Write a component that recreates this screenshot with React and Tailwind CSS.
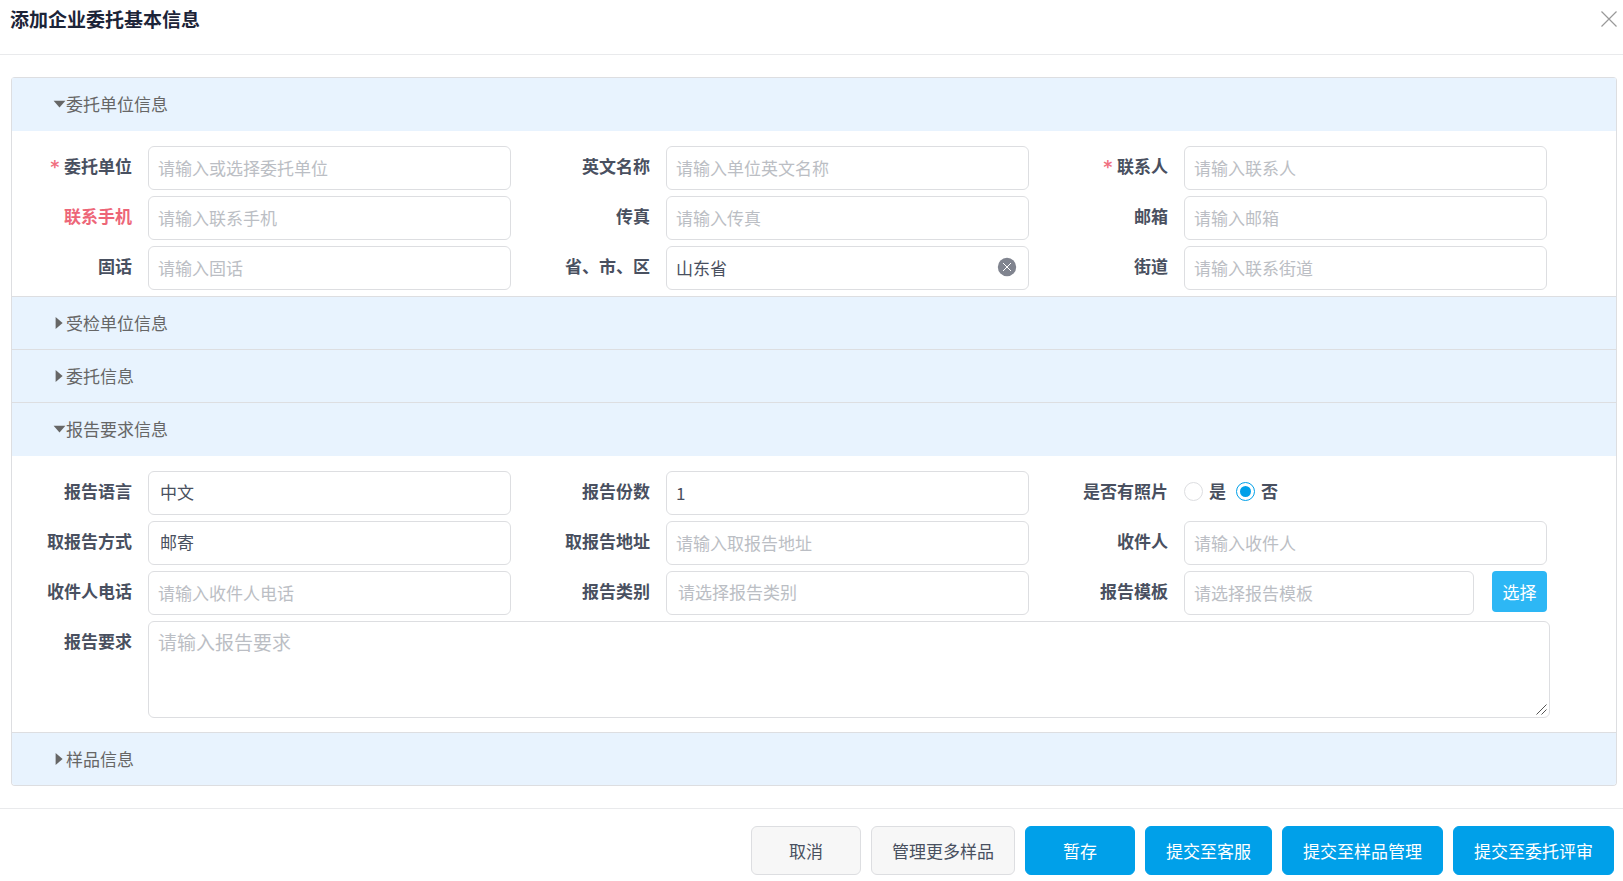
import { useId, useState } from "react";

const CONTROL =
  "block h-11 w-full appearance-none rounded-md border border-[#dddee1] bg-white pb-0.5 text-[17px] text-[#495060] outline-none placeholder:text-[#bbbec4] focus:border-[#00a0e9]";

function Caret({ open }) {
  return (
    <svg className="h-3 w-[13px] shrink-0 fill-[#666]" viewBox="0 0 13 12" aria-hidden="true">
      {open ? <path d="M.6 2.8h11.8L6.5 9.6z" /> : <path d="M2.6 0v12L9.6 6z" />}
    </svg>
  );
}

function Section({ title, defaultOpen = false, children }) {
  const [open, setOpen] = useState(defaultOpen);
  return (
    <section>
      <button
        type="button"
        aria-expanded={open}
        onClick={() => setOpen(!open)}
        className={`flex w-full items-center border-t border-[#dddee1] bg-[#e8f3fe] pb-px pl-[41px] text-left text-[17px] text-[#666] ${
          open ? "h-[54px]" : "h-[53px]"
        }`}
      >
        <Caret open={open} />
        {title}
      </button>
      {open && children}
    </section>
  );
}

function FieldLabel({ htmlFor, text, required, red }) {
  return (
    <label
      htmlFor={htmlFor}
      className={`flex h-10 w-[136px] shrink-0 items-center justify-end pr-4 text-[17px] font-bold whitespace-nowrap ${
        red ? "text-[#ed6678]" : "text-[#495060]"
      }`}
    >
      {required && (
        <span className="mr-1 pt-1 font-['DejaVu_Sans_Mono',monospace] text-[17px] font-bold text-[#f0707f]">*</span>
      )}
      {text}
    </label>
  );
}

function Field({ label, required, red, children }) {
  const id = useId();
  return (
    <div className="flex pr-[19px]">
      <FieldLabel htmlFor={id} text={label} required={required} red={red} />
      <div className="min-w-0 flex-1">{children(id)}</div>
    </div>
  );
}

function TextField({ label, placeholder, value, required, red }) {
  return (
    <Field label={label} required={required} red={red}>
      {(id) => (
        <input
          id={id}
          type="text"
          placeholder={placeholder}
          defaultValue={value}
          className={`${CONTROL} px-[9px]`}
        />
      )}
    </Field>
  );
}

function SelectField({ label, option, empty }) {
  return (
    <Field label={label}>
      {(id) => (
        <select id={id} className={`${CONTROL} px-[11px] ${empty ? "text-[#bbbec4]!" : ""}`}>
          <option>{option}</option>
        </select>
      )}
    </Field>
  );
}

function RegionField() {
  const [region, setRegion] = useState("山东省");
  return (
    <Field label="省、市、区">
      {(id) => (
        <div className="relative">
          <input
            id={id}
            type="text"
            value={region}
            onChange={(e) => setRegion(e.target.value)}
            className={`${CONTROL} pr-10 pl-[9px]`}
          />
          {region && (
            <button
              type="button"
              aria-label="清除"
              onClick={() => setRegion("")}
              className="absolute top-[11px] right-3"
            >
              <svg className="size-5" viewBox="0 0 20 20" aria-hidden="true">
                <circle cx="10" cy="10" r="9.2" fill="#80848f" />
                <path d="M6 6l8 8M14 6l-8 8" stroke="#fff" strokeWidth="1" fill="none" />
              </svg>
            </button>
          )}
        </div>
      )}
    </Field>
  );
}

function Radio({ text, checked, onChange }) {
  return (
    <label className="flex items-center gap-1.5">
      <input
        type="radio"
        name="photo"
        checked={checked}
        onChange={onChange}
        className="flex size-[19px] appearance-none items-center justify-center rounded-full border border-[#dddee1] bg-white before:size-[11px] before:rounded-full checked:border-[#00a0e9] checked:before:bg-[#00a0e9]"
      />
      {text}
    </label>
  );
}

function PhotoField() {
  const [value, setValue] = useState("否");
  return (
    <div className="flex pr-[19px]" role="radiogroup" aria-label="是否有照片">
      <span className="flex h-10 w-[136px] shrink-0 items-center justify-end pr-4 text-[17px] font-bold whitespace-nowrap text-[#495060]">
        是否有照片
      </span>
      <div className="flex h-10 items-center gap-2.5 text-[17px] font-bold text-[#495060]">
        {["是", "否"].map((o) => (
          <Radio key={o} text={o} checked={value === o} onChange={() => setValue(o)} />
        ))}
      </div>
    </div>
  );
}

function TemplateField() {
  return (
    <Field label="报告模板">
      {(id) => (
        <div className="flex gap-[18px]">
          <input id={id} type="text" placeholder="请选择报告模板" className={`${CONTROL} min-w-0 flex-1 px-[9px]`} />
          <button type="button" className="h-[41px] w-[55px] shrink-0 rounded-[4px] bg-[#2db7f5] text-[17px] text-white">
            选择
          </button>
        </div>
      )}
    </Field>
  );
}

function FormGrid({ children }) {
  return <div className="grid grid-cols-3 gap-y-1.5 pr-[50px]">{children}</div>;
}

function FooterButton({ children, primary }) {
  return (
    <button
      type="button"
      className={`h-[49px] min-w-[110px] rounded-md border px-5 text-[17px] whitespace-nowrap ${
        primary ? "border-[#00a0e9] bg-[#00a0e9] text-white" : "border-[#dddee1] bg-[#f7f7f7] text-[#495060]"
      }`}
    >
      {children}
    </button>
  );
}

export default function App() {
  return (
    <div
      role="dialog"
      aria-labelledby="dialog-title"
      className="bg-white font-['Noto_Sans_CJK_SC',sans-serif]"
    >
      <header className="border-b border-[#e9eaec] pr-1.5 pb-4 pl-2.5">
        <div className="flex h-[38px] items-center justify-between">
          <h1 id="dialog-title" className="text-[19px] font-bold text-[#1c2438]">
            添加企业委托基本信息
          </h1>
          <button type="button" aria-label="关闭">
            <svg className="size-4" viewBox="0 0 16 16" aria-hidden="true">
              <path d="M.5.5l15 15M15.5.5l-15 15" stroke="#999" strokeWidth="1.2" fill="none" />
            </svg>
          </button>
        </div>
      </header>

      <main className="py-[22px] pr-1.5 pl-[11px]">
        <div className="overflow-hidden rounded-[4px] border border-t-0 border-[#dddee1]">
          <Section title="委托单位信息" defaultOpen>
            <div className="pt-[15px] pb-1.5">
              <FormGrid>
                <TextField label="委托单位" placeholder="请输入或选择委托单位" required />
                <TextField label="英文名称" placeholder="请输入单位英文名称" />
                <TextField label="联系人" placeholder="请输入联系人" required />
                <TextField label="联系手机" placeholder="请输入联系手机" red />
                <TextField label="传真" placeholder="请输入传真" />
                <TextField label="邮箱" placeholder="请输入邮箱" />
                <TextField label="固话" placeholder="请输入固话" />
                <RegionField />
                <TextField label="街道" placeholder="请输入联系街道" />
              </FormGrid>
            </div>
          </Section>
          <Section title="受检单位信息" />
          <Section title="委托信息" />
          <Section title="报告要求信息" defaultOpen>
            <div className="flex flex-col gap-1.5 pt-[15px] pb-3.5">
              <FormGrid>
                <SelectField label="报告语言" option="中文" />
                <TextField label="报告份数" value="1" />
                <PhotoField />
                <SelectField label="取报告方式" option="邮寄" />
                <TextField label="取报告地址" placeholder="请输入取报告地址" />
                <TextField label="收件人" placeholder="请输入收件人" />
                <TextField label="收件人电话" placeholder="请输入收件人电话" />
                <SelectField label="报告类别" option="请选择报告类别" empty />
                <TemplateField />
              </FormGrid>
              <div className="flex pr-[66px]">
                <FieldLabel htmlFor="report-demand" text="报告要求" />
                <div className="relative min-w-0 flex-1">
                  <textarea
                    id="report-demand"
                    placeholder="请输入报告要求"
                    className="block h-[97px] w-full resize-y rounded-md border border-[#dddee1] px-[9px] py-1.5 text-[19px] leading-7 text-[#495060] outline-none placeholder:text-[#bbbec4] focus:border-[#00a0e9] [&::-webkit-resizer]:bg-transparent"
                  />
                  <svg
                    className="pointer-events-none absolute right-[3px] bottom-[3px] size-[11px]"
                    viewBox="0 0 11 11"
                    aria-hidden="true"
                  >
                    <path d="M.5 10.5l10-10M5.5 10.5l5-5" stroke="#555" strokeWidth="1" fill="none" />
                  </svg>
                </div>
              </div>
            </div>
          </Section>
          <Section title="样品信息" />
        </div>
      </main>

      <footer className="flex flex-wrap justify-end gap-2.5 border-t border-[#e9eaec] pt-[17px] pr-[9px] pb-1">
        <FooterButton>取消</FooterButton>
        <FooterButton>管理更多样品</FooterButton>
        <FooterButton primary>暂存</FooterButton>
        <FooterButton primary>提交至客服</FooterButton>
        <FooterButton primary>提交至样品管理</FooterButton>
        <FooterButton primary>提交至委托评审</FooterButton>
      </footer>
    </div>
  );
}
